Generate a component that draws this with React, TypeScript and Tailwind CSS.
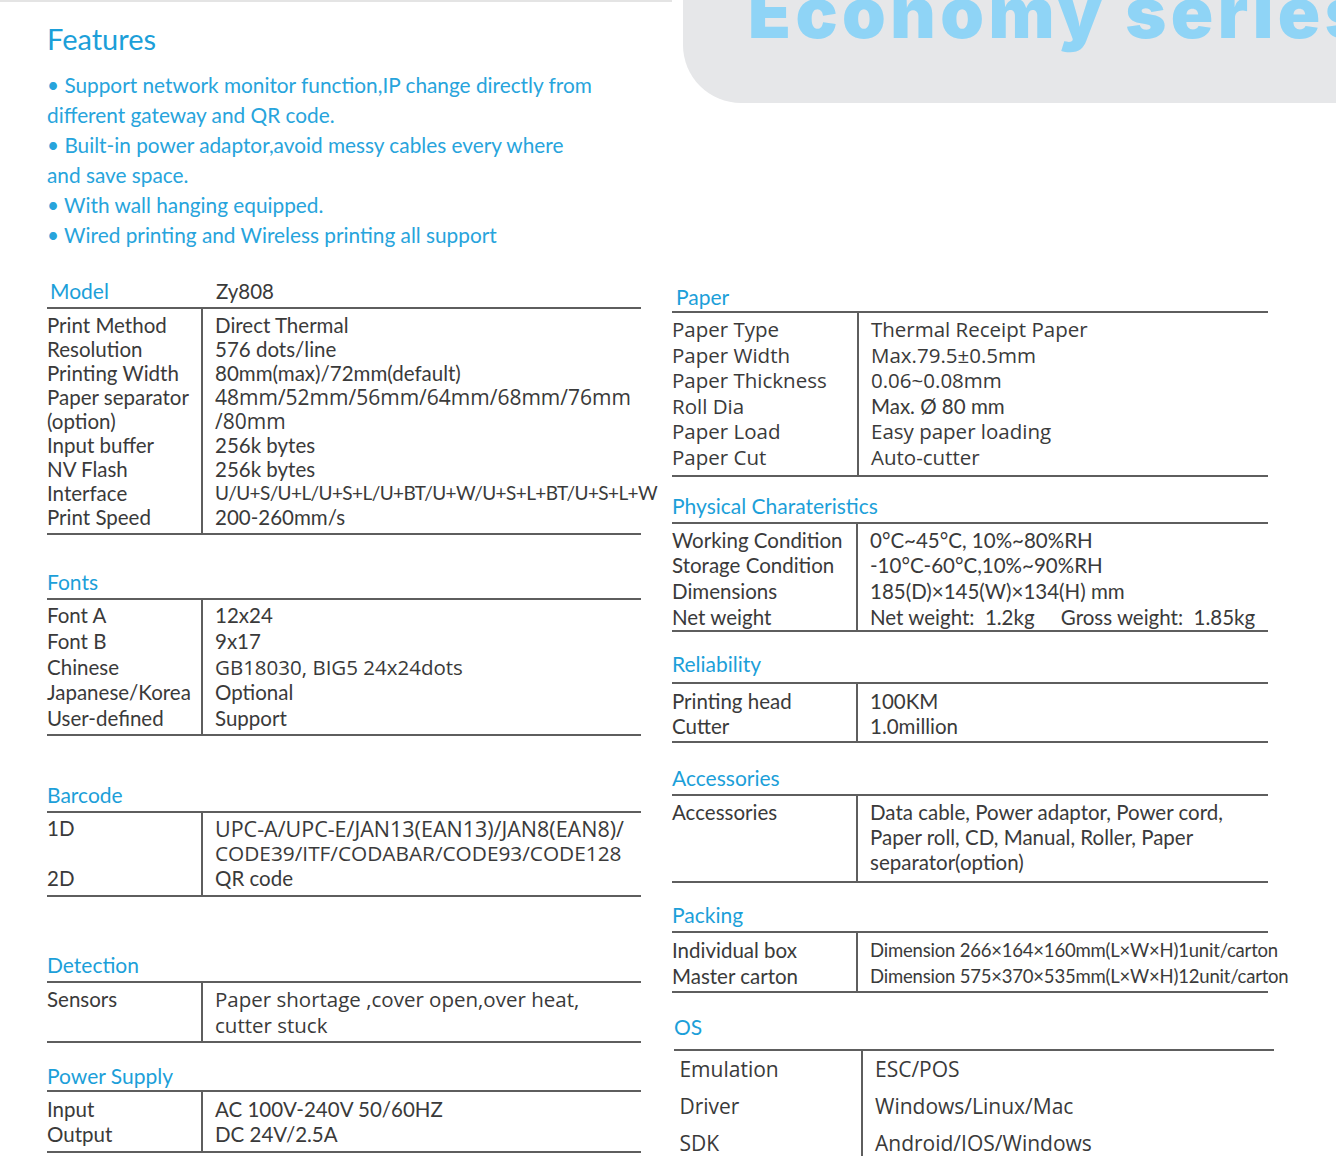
import React from 'react';

const N = "font-['Lato',sans-serif]";
const W = "font-['Open_Sans',sans-serif]";

type Line = { l?: string; v?: string; lc?: string; vc?: string };

function Spec({
  title,
  lines,
  wrap,
  head,
  body,
  lh,
  lw,
}: {
  title: string;
  lines: Line[];
  wrap: string;
  head: string;
  body: string;
  lh: string;
  lw: string;
}) {
  return (
    <section className={wrap}>
      <h3 className={`text-[21px] leading-[28px] text-[#1c9fd9] ${N} ${head}`}>{title}</h3>
      <div className={`flex border-y-2 border-[#5e5e5e] text-[20.5px] text-[#3a3a3a] ${lh}`}>
        <div className={`${lw} shrink-0 border-r-2 border-[#5e5e5e] ${body}`}>
          {lines.map((x, i) => (
            <div key={i} className={`whitespace-pre ${x.lc ?? N}`}>
              {x.l ?? '\u00a0'}
            </div>
          ))}
        </div>
        <div className={`pl-[12px] min-w-0 ${body}`}>
          {lines.map((x, i) => (
            <div key={i} className={`whitespace-pre ${x.vc ?? N}`}>
              {x.v ?? '\u00a0'}
            </div>
          ))}
        </div>
      </div>
    </section>
  );
}

const features = [
  '• Support network monitor function,IP change directly from',
  'different gateway and QR code.',
  '• Built-in power adaptor,avoid messy cables every where',
  'and save space.',
  '• With wall hanging equipped.',
  '• Wired printing and Wireless printing all support',
];

const pack = `${N} text-[18.5px] tracking-[-0.2px]`;
const os = `${W} text-[21px]`;

export default function App() {
  return (
    <div className="w-[1336px] h-[1156px] overflow-hidden bg-white flex">
      {/* left column */}
      <div className="w-[672px] shrink-0 border-t-2 border-[#e4e4e4] pl-[47px]">
        <div className="w-[594px]">
          <h1 className={`pt-[20px] text-[29px] leading-[34px] text-[#1c9fd9] ${N}`}>Features</h1>
          <ul className={`mt-[14px] text-[20.8px] leading-[30px] text-[#27a4dc] ${N}`}>
            {features.map((f) => (
              <li key={f} className="whitespace-nowrap">{f}</li>
            ))}
          </ul>

          {/* model table */}
          <section className="mt-[27px]">
            <div className={`flex text-[21px] leading-[28px] mb-[2px] ${N}`}>
              <div className="w-[156px] pl-[3px] text-[#1c9fd9]">Model</div>
              <div className="pl-[13px] text-[#3a3a3a] text-[20.5px]">Zy808</div>
            </div>
            <div className="flex border-y-2 border-[#5e5e5e] text-[20.5px] text-[#3a3a3a] leading-[24px]">
              <div className={`w-[156px] shrink-0 border-r-2 border-[#5e5e5e] py-[4px] ${N}`}>
                {['Print Method', 'Resolution', 'Printing Width', 'Paper separator', '(option)', 'Input buffer', 'NV Flash', 'Interface', 'Print Speed'].map((l) => (
                  <div key={l} className="whitespace-nowrap">{l}</div>
                ))}
              </div>
              <div className="pl-[12px] py-[4px] whitespace-nowrap">
                <div className={N}>Direct Thermal</div>
                <div className={N}>576 dots/line</div>
                <div className={N}>80mm(max)/72mm(default)</div>
                <div className={`${W} text-[21px]`}>48mm/52mm/56mm/64mm/68mm/76mm</div>
                <div className={`${W} text-[21px]`}>/80mm</div>
                <div className={N}>256k bytes</div>
                <div className={N}>256k bytes</div>
                <div className={`${N} text-[19px] tracking-[-0.6px]`}>U/U+S/U+L/U+S+L/U+BT/U+W/U+S+L+BT/U+S+L+W</div>
                <div className={N}>200-260mm/s</div>
              </div>
            </div>
          </section>

          <Spec
            title="Fonts"
            lw="w-[156px]"
            wrap="mt-[33px]"
            head="mb-[2px]"
            body="pt-[3px] pb-[2px]"
            lh="leading-[25.75px]"
            lines={[
              { l: 'Font A', v: '12x24' },
              { l: 'Font B', v: '9x17' },
              { l: 'Chinese', v: 'GB18030, BIG5 24x24dots', vc: W },
              { l: 'Japanese/Korea', v: 'Optional' },
              { l: 'User-defined', v: 'Support' },
            ]}
          />
          <Spec
            title="Barcode"
            lw="w-[156px]"
            wrap="mt-[45px]"
            head="mb-[2px]"
            body="pt-[3px] pb-[4px]"
            lh="leading-[25px]"
            lines={[
              { l: '1D', v: 'UPC-A/UPC-E/JAN13(EAN13)/JAN8(EAN8)/', vc: `${W} text-[21.5px]` },
              { v: 'CODE39/ITF/CODABAR/CODE93/CODE128', vc: `${W} text-[20.8px]` },
              { l: '2D', v: 'QR code' },
            ]}
          />
          <Spec
            title="Detection"
            lw="w-[156px]"
            wrap="mt-[54px]"
            head="mb-[2px]"
            body="pt-[3px] pb-[3px]"
            lh="leading-[26px]"
            lines={[
              { l: 'Sensors', v: 'Paper shortage ,cover open,over heat,', vc: W },
              { v: 'cutter stuck', vc: W },
            ]}
          />
          <Spec
            title="Power Supply"
            lw="w-[156px]"
            wrap="mt-[19px]"
            head="mb-[0px]"
            body="pt-[5px] pb-[4px]"
            lh="leading-[25px]"
            lines={[
              { l: 'Input', v: 'AC 100V-240V 50/60HZ' },
              { l: 'Output', v: 'DC 24V/2.5A' },
            ]}
          />
        </div>
      </div>

      {/* right column */}
      <div className="flex-1 min-w-0">
        <div className="ml-[11px] h-[103px] bg-[#e6e7e9] rounded-bl-[58px] overflow-hidden">
          <div className="pl-[65px] -mt-[22px] whitespace-nowrap font-['Inter',sans-serif] font-black text-[70px] leading-none tracking-[4.5px] text-[#8fd4f6]">
            Economy series
          </div>
        </div>
        <div className="w-[596px]">
          <Spec
            title="Paper"
            lw="w-[187px]"
            wrap="mt-[180px]"
            head="mb-[0px] pl-[4px]"
            body="pt-[4px] pb-[4px]"
            lh="leading-[25.6px]"
            lines={[
              { l: 'Paper Type', v: 'Thermal Receipt Paper', lc: W, vc: W },
              { l: 'Paper Width', v: 'Max.79.5±0.5mm', lc: W, vc: W },
              { l: 'Paper Thickness', v: '0.06~0.08mm', lc: W, vc: W },
              { l: 'Roll Dia', v: 'Max. Ø 80 mm', lc: W },
              { l: 'Paper Load', v: 'Easy paper loading', lc: W, vc: W },
              { l: 'Paper Cut', v: 'Auto-cutter', lc: W, vc: W },
            ]}
          />
          <Spec
            title="Physical Charateristics"
            lw="w-[186px]"
            wrap="mt-[15px]"
            head="mb-[2px]"
            body="pt-[4px] pb-[0px]"
            lh="leading-[25.7px]"
            lines={[
              { l: 'Working Condition', v: '0°C~45°C, 10%~80%RH' },
              { l: 'Storage Condition', v: '-10°C-60°C,10%~90%RH' },
              { l: 'Dimensions', v: '185(D)×145(W)×134(H) mm' },
              { l: 'Net weight', v: 'Net weight:  1.2kg     Gross weight:  1.85kg' },
            ]}
          />
          <Spec
            title="Reliability"
            lw="w-[186px]"
            wrap="mt-[18px]"
            head="mb-[4px]"
            body="pt-[5px] pb-[2px]"
            lh="leading-[25px]"
            lines={[
              { l: 'Printing head', v: '100KM' },
              { l: 'Cutter', v: '1.0million' },
            ]}
          />
          <Spec
            title="Accessories"
            lw="w-[186px]"
            wrap="mt-[21px]"
            head="mb-[2px]"
            body="pt-[4px] pb-[6px]"
            lh="leading-[25px]"
            lines={[
              { l: 'Accessories', v: 'Data cable, Power adaptor, Power cord,' },
              { v: 'Paper roll, CD, Manual, Roller, Paper' },
              { v: 'separator(option)' },
            ]}
          />
          <Spec
            title="Packing"
            lw="w-[186px]"
            wrap="mt-[18px]"
            head="mb-[2px]"
            body="pt-[4px] pb-[2px]"
            lh="leading-[26px]"
            lines={[
              { l: 'Individual box', v: 'Dimension 266×164×160mm(L×W×H)1unit/carton', vc: pack },
              { l: 'Master carton', v: 'Dimension 575×370×535mm(L×W×H)12unit/carton', vc: pack },
            ]}
          />
          <div className="ml-[2px] w-[600px]">
            <Spec
              title="OS"
              lw="w-[189px]"
              wrap="mt-[20px]"
              head="mb-[8px]"
              body="pt-[0px] pb-[0px]"
              lh="leading-[37px]"
              lines={[
                { l: ' Emulation', v: 'ESC/POS', lc: os, vc: os },
                { l: ' Driver', v: 'Windows/Linux/Mac', lc: os, vc: os },
                { l: ' SDK', v: 'Android/IOS/Windows', lc: os, vc: os },
              ]}
            />
          </div>
        </div>
      </div>
    </div>
  );
}
